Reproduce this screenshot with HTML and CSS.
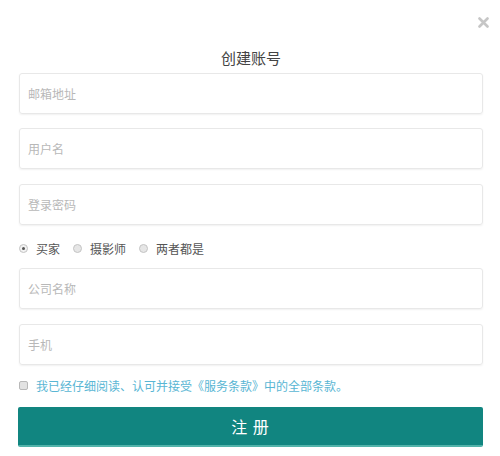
FILE: index.html
```html
<!DOCTYPE html>
<html lang="zh">
<head>
<meta charset="utf-8">
<title>创建账号</title>
<link rel="stylesheet" href="styles.css">
</head>
<body>
<div class="modal">
  <div class="close-row">
    <svg class="close" width="11" height="11" viewBox="0 0 11 11"><path d="M1.5 1.5 L9.5 9.5 M9.5 1.5 L1.5 9.5" stroke="#c6c6c6" stroke-width="2.6" stroke-linecap="round"/></svg>
  </div>
  <h1 class="title">创建账号</h1>
  <div class="field f1">邮箱地址</div>
  <div class="field f2">用户名</div>
  <div class="field f2b">登录密码</div>
  <div class="radios">
    <label class="radio"><span class="dot checked"></span>买家</label>
    <label class="radio"><span class="dot"></span>摄影师</label>
    <label class="radio"><span class="dot"></span>两者都是</label>
  </div>
  <div class="field f3">公司名称</div>
  <div class="field f2b">手机</div>
  <div class="agree"><span class="box"></span>我已经仔细阅读、认可并接受《服务条款》中的全部条款。</div>
  <div class="btn">注 册</div>
</div>
</body>
</html>
```
FILE: styles.css
```css
* { box-sizing: border-box; }
html, body { margin: 0; padding: 0; background: #fff; }
body { font-family: "Noto Sans CJK SC", "Noto Sans", sans-serif; }
.modal {
  width: 500px;
  padding: 10px 17px 0 19px;
  display: flex;
  flex-direction: column;
}
.close-row {
  height: 20px;
  display: flex;
  justify-content: flex-end;
  align-items: center;
}
.close {
  margin-right: -6px;
  margin-top: 4px;
}
.title {
  margin: 13px 0 0;
  height: 30px;
  line-height: 30px;
  font-size: 15px;
  font-weight: normal;
  color: #444;
  text-align: center;
}
.field {
  height: 41px;
  border: 1px solid #e8e8e8;
  border-radius: 3px;
  box-shadow: 0 1px 2px rgba(0,0,0,0.06);
  padding-left: 8px;
  display: flex;
  align-items: center;
  font-size: 12px;
  color: #b8b8b8;
}
.f2 { margin-top: 14px; }
.f2b { margin-top: 15px; }
.f3 { margin-top: 10px; }
.radios {
  margin-top: 13px;
  height: 20px;
  display: flex;
  align-items: center;
  gap: 13px;
  font-size: 12px;
  color: #555;
}
.radio { display: flex; align-items: center; gap: 8px; }
.dot {
  width: 9px; height: 9px;
  border-radius: 50%;
  border: 1px solid #c4c4c4;
  background: #e6e6e6;
  display: inline-flex;
  align-items: center;
  justify-content: center;
}
.dot.checked { background: #f2f2f2; }
.dot.checked::after {
  content: "";
  width: 3px; height: 3px;
  border-radius: 50%;
  background: #555;
}
.agree {
  margin-top: 10px;
  height: 20px;
  display: flex;
  align-items: center;
  gap: 8px;
  font-size: 12px;
  color: #59b6d4;
}
.box {
  width: 9px; height: 9px;
  border: 1px solid #b8b8b8;
  border-radius: 2px;
  background: #e2e2e2;
}
.btn {
  margin-top: 12px;
  margin-left: -1px;
  height: 40px;
  background: #118580;
  border-bottom: 2px solid #52b3aa;
  border-radius: 2px;
  color: #fff;
  font-size: 16px;
  display: flex;
  align-items: center;
  justify-content: center;
  letter-spacing: 1px;
}
```
